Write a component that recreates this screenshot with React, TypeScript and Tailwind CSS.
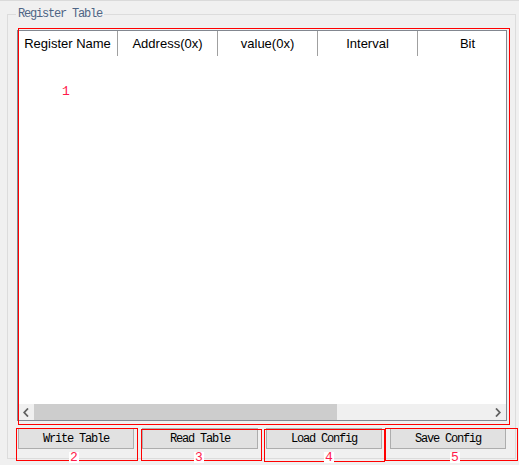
import React from "react";

const mono = { fontFamily: '"Liberation Mono", "DejaVu Sans Mono", monospace' };
const sans = { fontFamily: '"Liberation Sans", Arial, sans-serif' };

const columns = ["Register Name", "Address(0x)", "value(0x)", "Interval", "Bit"];
const buttons = ["Write Table", "Read Table", "Load Config", "Save Config"];

function Chevron({ dir }: { dir: "left" | "right" }) {
  return (
    <svg width="6" height="9" viewBox="0 0 6 9" className="block">
      {dir === "left" ? (
        <path d="M5 0.5 L1.2 4.5 L5 8.5" fill="none" stroke="#606060" strokeWidth="1.8" />
      ) : (
        <path d="M1 0.5 L4.8 4.5 L1 8.5" fill="none" stroke="#606060" strokeWidth="1.8" />
      )}
    </svg>
  );
}

function Marker({ n, className }: { n: string; className: string }) {
  return (
    <span
      className={`absolute bg-white px-[1px] text-[13px] leading-[11px] text-[#ff1a4a] ${className}`}
      style={mono}
    >
      {n}
    </span>
  );
}

export default function App() {
  return (
    <div className="relative h-[465px] w-[519px] overflow-hidden border-t border-[#dadada] bg-[#f0f0f0]">
      {/* Register Table group box */}
      <div className="relative ml-[7px] mt-[13px] h-[445px] w-[509px] border border-[#dcdcdc]">
        <span
          className="absolute left-[8px] top-[-8px] bg-[#f0f0f0] px-[2px] text-[12px] leading-[14px] tracking-[-1.2px] text-[#4f6585]"
          style={mono}
        >
          Register Table
        </span>

        <div className="flex flex-col pl-[9px] pt-[15px]">
          {/* list view */}
          <div className="flex h-[391px] w-[490px] flex-col overflow-hidden border border-[#828790] bg-white">
            <div className="flex h-[25px] shrink-0">
              {columns.map((c) => (
                <div
                  key={c}
                  className="flex h-[25px] w-[100px] shrink-0 items-center justify-center border-r border-[#a0a0a0] text-[13px] text-black"
                  style={sans}
                >
                  {c}
                </div>
              ))}
            </div>
            <div className="flex-1" />
            {/* horizontal scrollbar */}
            <div className="flex h-[16px] shrink-0 bg-[#f0f0f0]">
              <div className="flex w-[16px] items-center justify-center">
                <Chevron dir="left" />
              </div>
              <div className="h-full w-[303px] bg-[#cdcdcd]" />
              <div className="flex-1" />
              <div className="flex w-[16px] items-center justify-center">
                <Chevron dir="right" />
              </div>
            </div>
          </div>

          {/* action buttons */}
          <div className="ml-[1px] mt-[7px] flex gap-[8px]">
            {buttons.map((b) => (
              <div
                key={b}
                className="flex h-[21px] w-[116px] items-center justify-center border border-[#adadad] bg-[#e1e1e1] pt-[1px] text-[12px] tracking-[-1.2px] text-black"
                style={mono}
              >
                {b}
              </div>
            ))}
          </div>
        </div>
      </div>

      {/* numbered outlines */}
      <div className="pointer-events-none absolute left-[18px] top-[27px] h-[397px] w-[492px] border border-[#ff0000]" />
      <div className="pointer-events-none absolute left-[16px] top-[427px] h-[33px] w-[122px] border border-[#ff0000]" />
      <div className="pointer-events-none absolute left-[141px] top-[428px] h-[32px] w-[121px] border border-[#ff0000]" />
      <div className="pointer-events-none absolute left-[264px] top-[428px] h-[33px] w-[121px] border border-[#ff0000]" />
      <div className="pointer-events-none absolute left-[385px] top-[427px] h-[33px] w-[133px] border border-[#ff0000]" />

      <span
        className="absolute left-[62px] top-[85px] text-[13px] leading-[11px] text-[#ff1a4a]"
        style={mono}
      >
        1
      </span>
      <Marker n="2" className="left-[69px] top-[451px]" />
      <Marker n="3" className="left-[194px] top-[451px]" />
      <Marker n="4" className="left-[324px] top-[451px]" />
      <Marker n="5" className="left-[450px] top-[451px]" />
    </div>
  );
}
